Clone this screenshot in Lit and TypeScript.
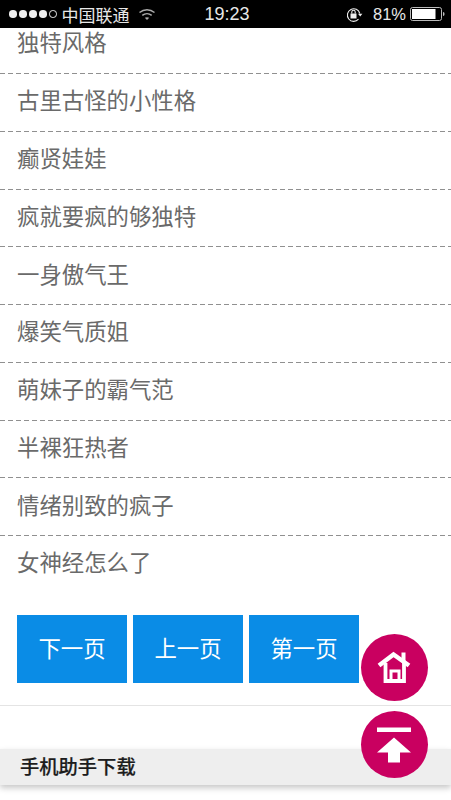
import { LitElement, html, css } from "lit";
import { customElement } from "lit/decorators.js";

const ITEMS = ["独特风格","古里古怪的小性格","癫贤娃娃","疯就要疯的够独特","一身傲气王","爆笑气质姐","萌妹子的霸气范","半裸狂热者","情绪别致的疯子","女神经怎么了"];

@customElement("app-root")
export class AppRoot extends LitElement {
  static styles = css`
    :host { display: block; width: 451px; height: 800px; overflow: hidden; position: relative; background: #fff;
      font-family: "Liberation Sans", "Noto Sans CJK SC", sans-serif; }
    .status { height: 28px; background: #000; color: #e8e8e8; display: grid; grid-template-columns: 1fr auto 1fr; align-items: center; padding: 0 6px 0 9px; box-sizing: border-box; }
    .left, .right { display: flex; align-items: center; }
    .right { justify-content: flex-end; }
    .dots { display: flex; gap: 2.500px; margin-right: 5px; }
    .dot { width: 7.500px; height: 7.500px; border-radius: 50%; background: #eee; box-sizing: border-box; }
    .dot.off { background: none; border: 1px solid #eee; }
    .carrier { font-size: 17px; margin-right: 8px; }
    .time { font-size: 18px; }
    .pct { font-size: 16.500px; margin: 0 4px 0 10px; }
    ul { list-style: none; margin: 0; padding: 0; }
    li { height: 57.750px; padding: 0 0 7px 17px; box-sizing: border-box; font-size: 22.400px; color: #6a6a6a; display: flex; align-items: center;
      background: repeating-linear-gradient(90deg, #909090 0 5px, transparent 5px 8px) left bottom / 100% 1px no-repeat; }
    li:first-child { height: 46px; padding-bottom: 20px; }
    li:last-child { background: none; height: 58px; padding-bottom: 8px; }
    .pager { display: flex; gap: 6px; padding: 21px 17px 0; }
    .btn { width: 110px; height: 68px; padding-bottom: 5px; box-sizing: border-box; background: #0a8ce6; color: #fff; font-size: 22.400px; display: flex; align-items: center; justify-content: center; }
    .rule { height: 1px; background: #e4e4e4; margin-top: 22px; }
    .dl { margin-top: 43px; height: 36px; background: #eeeeee; box-shadow: 0 3px 6px rgba(0,0,0,.22); padding: 0 0 2px 20px; box-sizing: border-box; font-size: 19.300px; font-weight: 500; -webkit-text-stroke: .2px #1c1c1c; color: #1c1c1c; display: flex; align-items: center; }
    .fab { position: absolute; left: 361px; width: 67px; height: 67px; border-radius: 50%; background: #c90060; display: flex; align-items: center; justify-content: center; }
    .home { top: 634px; }
    .top { top: 711px; }
  `;
  render() {
    return html`
      <div class="status">
        <div class="left">
          <div class="dots"><i class="dot"></i><i class="dot"></i><i class="dot"></i><i class="dot"></i><i class="dot off"></i></div>
          <span class="carrier">中国联通</span>
          <svg width="18" height="13" viewBox="0 0 18 13" fill="none" stroke="#aaa" stroke-width="1.5">
            <path d="M1.500 4.500C6 .8 12 .8 16.500 4.500"/><path d="M4.300 7.300C7 5.200 11 5.200 13.700 7.300"/><path d="M9 12L6.800 9.800C8 8.900 10 8.900 11.200 9.800Z" fill="#aaa" stroke="none"/>
          </svg>
        </div>
        <div class="time">19:23</div>
        <div class="right">
          <svg width="17" height="17" viewBox="0 0 17 17" fill="none" stroke="#eee" stroke-width="1.100">
            <path d="M13.800 7.500A6.300 6.300 0 1 0 12.500 13.200"/><path d="M12 7.800h4.400l-2.200 2.600z" fill="#eee" stroke="none"/>
            <rect x="4.500" y="7.500" width="6" height="5" fill="#eee" stroke="none"/><path d="M5.800 7.500V6a1.700 1.700 0 0 1 3.400 0v1.500"/>
          </svg>
          <span class="pct">81%</span>
          <svg width="35" height="14" viewBox="0 0 35 14">
            <rect x=".5" y=".5" width="31" height="13" rx="2" fill="none" stroke="#bbb"/>
            <rect x="2" y="2" width="23.500" height="10" fill="#fff"/>
            <path d="M33 5c1 0 1.500.8 1.500 2S34 9 33 9z" fill="#bbb"/>
          </svg>
        </div>
      </div>
      <ul>${ITEMS.map((t) => html`<li>${t}</li>`)}</ul>
      <div class="pager">
        <div class="btn">下一页</div><div class="btn">上一页</div><div class="btn">第一页</div>
      </div>
      <div class="rule"></div>
      <div class="dl">手机助手下载</div>
      <div class="fab home">
        <svg width="36" height="34" viewBox="0 0 36 34" fill="none" stroke="#fff">
          <path d="M2 14.500L16.500 3.500 32 14.500" stroke-width="4.500"/>
          <path d="M24.500 8V1.500h4v9" fill="#fff" stroke="none"/>
          <path d="M8.500 12V30H27V12" stroke-width="3.800"/>
          <path d="M14 29V20h8v9" stroke-width="3"/>
        </svg>
      </div>
      <div class="fab top">
        <svg width="36" height="36" viewBox="0 0 36 36" fill="#fff">
          <rect x="0" y=".5" width="34" height="4.500"/><path d="M17 10.500L34 25.500H23V35.500H11V25.500H0z"/>
        </svg>
      </div>
    `;
  }
}
